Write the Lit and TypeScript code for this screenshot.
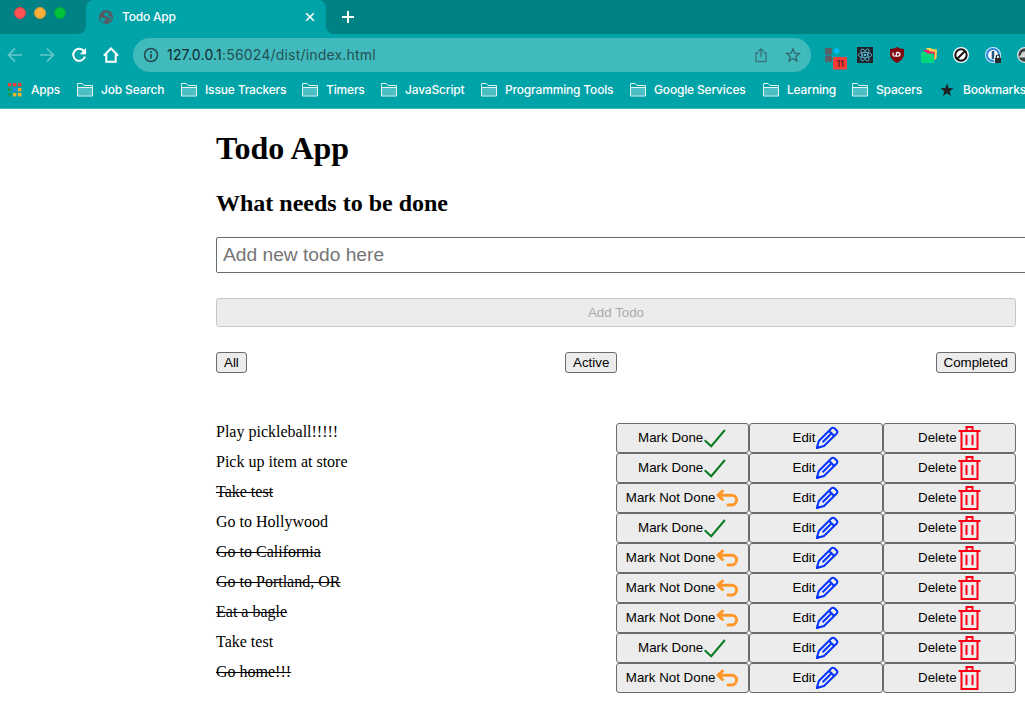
import { LitElement, html, css, svg } from "lit";
import { customElement, property } from "lit/decorators.js";

const folder = html`<svg width="16" height="14" viewBox="0 0 16 14"><path d="M1 5h14v7.500H1z" fill="#4bbfc3"/><path d="M.5 13V.5h4.700l1.800 2h8.500V13zM.5 4.500h15" fill="none" stroke="#e2f5f5"/></svg>`;

const gridColors = ["#f23b3b", "#f23b3b", "#f23b3b", "#169b58", "#2a86e8", "#f6a623", "#169b58", "#f6b52b", "#f6b52b"];
const appsGrid = html`<svg width="14" height="14" viewBox="0 0 14 14">${gridColors.map(
  (c, i) => svg`<rect x=${(i % 3) * 5} y=${Math.floor(i / 3) * 5} width="3.400" height="3.400" fill=${c}/>`
)}</svg>`;

const starSolid = html`<svg width="14" height="14" viewBox="0 0 14 14"><path d="M7 .5l1.700 4.500 4.800.2-3.800 3 1.300 4.700L7 10.200l-4 2.700 1.300-4.700-3.800-3 4.800-.2z" fill="#202124"/></svg>`;

const bookmarks = [
  { name: "Apps", icon: appsGrid, width: 69 },
  { name: "Job Search", icon: folder, width: 104 },
  { name: "Issue Trackers", icon: folder, width: 121 },
  { name: "Timers", icon: folder, width: 79 },
  { name: "JavaScript", icon: folder, width: 100 },
  { name: "Programming Tools", icon: folder, width: 149 },
  { name: "Google Services", icon: folder, width: 133 },
  { name: "Learning", icon: folder, width: 89 },
  { name: "Spacers", icon: folder, width: 87 },
  { name: "Bookmarks", icon: starSolid, width: 86 },
];

@customElement("browser-chrome")
class BrowserChrome extends LitElement {
  static styles = css`
    :host { display: block; font-family: Inter, "Open Sans", sans-serif; color: #fff; }
    svg { display: block; flex: none; }
    .strip { height: 34px; background: #008285; display: flex; }
    .lights { width: 66px; height: 34px; padding: 7px 0 0 14px; box-sizing: border-box; display: flex; gap: 8px; margin-right: 12px; }
    .light { width: 12px; height: 12px; border-radius: 50%; box-sizing: border-box; border: 1px solid; }
    .red { background: #ff5353; border-color: #e04446; }
    .amber { background: #ffb03c; border-color: #dc9c38; }
    .green { background: #00c33c; border-color: #00aa38; }
    .curve { width: 8px; height: 34px; background: #00a3a8; flex: none; }
    .curve i { display: block; height: 34px; background: #008285; }
    .curve.left i { border-bottom-right-radius: 8px; }
    .curve.right i { border-bottom-left-radius: 8px; }
    .tab { width: 240px; box-sizing: border-box; background: #00a3a8; border-radius: 8px 8px 0 0; display: flex; align-items: center; padding: 0 11px 0 13px; font-size: 12px; font-weight: 500; }
    .tab span { flex: 1; margin: -2px 0 0 9px; letter-spacing: -.2px; }
    .plus { margin: 10px 0 0 7px; }
    .toolbar { height: 42px; background: #00a3a8; display: flex; align-items: center; overflow: hidden; }
    .nav { width: 133px; display: flex; gap: 16px; padding-left: 7px; box-sizing: border-box; flex: none; }
    .address { width: 678px; height: 34px; box-sizing: border-box; border-radius: 17px; background: #40babd; color: #245153; display: flex; align-items: center; padding: 0 9px 0 10px; font-size: 14px; flex: none; }
    .address span { flex: 1; margin: -1px 0 0 8px; letter-spacing: .19px; }
    .address b { font-weight: 400; color: #14292b; }
    .address svg + svg { margin-left: 15px; }
    .extensions { display: flex; margin-left: 11px; flex: none; align-items: center; }
    .extensions svg { margin-right: 8px; overflow: visible; }
    .bookmarks { height: 33px; box-sizing: border-box; background: #00a3a8; border-bottom: 1px solid #40babd; display: flex; align-items: center; padding: 0 0 4px 8px; overflow: hidden; }
    .bookmark { display: flex; align-items: center; flex: none; font-size: 12px; font-weight: 500; letter-spacing: -.17px; white-space: nowrap; }
    .slot { width: 24px; flex: none; }
    .first .slot { width: 23px; }
    .last .slot { width: 24px; padding-left: 1px; box-sizing: border-box; }
    .label { flex: none; margin-top: -2px; }
  `;
  render() {
    return html`
      <div class="strip">
        <div class="lights"><div class="light red"></div><div class="light amber"></div><div class="light green"></div></div>
        <div class="curve left"><i></i></div>
        <div class="tab">
          <svg width="14" height="14" viewBox="0 0 14 14"><circle cx="7" cy="7" r="7" fill="#565c63"/><path d="M1.500 7.500l2.500.3 2.500 1-.3 1.500-.9.500-.3 2C2.900 12 1.300 10.300 1.500 7.500zM8 1.500L7.200 3 5 3.600l.2 1.800 2 .5 1.300 1.200 2.300.4.3 1.500-1.200 1.400-1.800.7c3 .2 4.500-2 4.400-4.400L10 6.300 8.700 5l1.400-1z" fill="#00a3a8"/></svg>
          <span>Todo App</span>
          <svg width="10" height="10" viewBox="0 0 10 10"><path d="M1.200 1.200l7.600 7.600M8.800 1.200L1.200 8.800" stroke="#fff" stroke-width="1.600"/></svg>
        </div>
        <div class="curve right"><i></i></div>
        <svg class="plus" width="14" height="14" viewBox="0 0 14 14"><path d="M7 1v12M1 7h12" stroke="#fff" stroke-width="2"/></svg>
      </div>
      <div class="toolbar">
        <div class="nav">
          <svg width="16" height="16" viewBox="0 0 16 16"><path d="M15 8H2M8 1.500L1.500 8 8 14.500" fill="none" stroke="#66c8cb" stroke-width="1.700"/></svg>
          <svg width="16" height="16" viewBox="0 0 16 16"><path d="M1 8h13M8 1.500L14.500 8 8 14.500" fill="none" stroke="#66c8cb" stroke-width="1.700"/></svg>
          <svg width="16" height="16" viewBox="0 0 16 16"><path d="M13.200 4.400A6 6 0 1 0 14 9.500" fill="none" stroke="#fff" stroke-width="2"/><path d="M15 1v6.200H8.800z" fill="#fff"/></svg>
          <svg width="16" height="16" viewBox="0 0 16 16"><path d="M.8 8.600L8 1.500l7.200 7.100M3.300 7v7.700h9.400V7" fill="none" stroke="#fff" stroke-width="2"/></svg>
        </div>
        <div class="address">
          <svg width="16" height="16" viewBox="0 0 16 16"><circle cx="8" cy="8" r="6.500" fill="none" stroke="#28494b" stroke-width="1.500"/><path d="M8 7v4.500M8 4.300v1.600" stroke="#28494b" stroke-width="1.700"/></svg>
          <span><b>127.0.0.1</b>:56024/dist/index.html</span>
          <svg width="16" height="16" viewBox="0 0 16 16"><path d="M5.500 6H3v8.500h10V6h-2.500M8 10.500V2M5.300 4.500L8 1.800l2.700 2.700" fill="none" stroke="#37777a" stroke-width="1.400"/></svg>
          <svg width="18" height="16" viewBox="0 0 18 16"><path d="M9 1.800l1.700 4.400 4.700.3-3.600 3 1.200 4.600L9 11.500l-4 2.600 1.200-4.600-3.600-3 4.700-.3z" fill="none" stroke="#306b6e" stroke-width="1.300"/></svg>
        </div>
        <div class="extensions">
          <svg width="24" height="24" viewBox="0 0 24 24"><rect x="3" y="5" width="7" height="6.500" rx="1" fill="#5b5f64"/><rect x="3" y="12.500" width="7" height="6.500" rx="1" fill="#5b5f64"/><path d="M14.500 4.500L18 8l-3.500 3.500L11 8z" fill="#00bfff"/><rect x="11" y="14" width="14" height="12.500" rx="1.500" fill="#f93a37"/><text x="18" y="24" text-anchor="middle" font-size="9.500" fill="#23191a">11</text></svg>
          <svg width="24" height="24" viewBox="0 0 24 24"><path d="M3 4h16v16H3z" fill="#20232a"/><g fill="none" stroke="#59bdd8" stroke-width=".8"><ellipse cx="11" cy="12" rx="6.800" ry="2.600"/><ellipse cx="11" cy="12" rx="6.800" ry="2.600" transform="rotate(60 11 12)"/><ellipse cx="11" cy="12" rx="6.800" ry="2.600" transform="rotate(120 11 12)"/></g><circle cx="11" cy="12" r="1.300" fill="#59bdd8"/></svg>
          <svg width="24" height="24" viewBox="0 0 24 24"><path d="M11 4c2 1.300 4.500 1.800 7 2v5c0 4-3 7-7 9-4-2-7-5-7-9V6c2.500-.2 5-.7 7-2z" fill="#800610"/><path d="M7 9.500v2.200q0 1.500 1.700 1.500t1.700-1.500V9.500v3.700h1.100q2.500 0 2.500-1.850T11.500 9.500h-1" fill="none" stroke="#fff" stroke-width="1.300"/></svg>
          <svg width="24" height="24" viewBox="0 0 24 24"><path d="M8 5h5l1 1 5 .5-.5 9L16 17z" fill="#f8d34a"/><path d="M5.500 7h5l1 1.200 5.500.8-1 9-3 1z" fill="#ef1c6b"/><path d="M3 9h5l1.300 1.500H16V20H4.500Q3 20 3 18.500z" fill="#00d87d"/></svg>
          <svg width="24" height="24" viewBox="0 0 24 24"><circle cx="11" cy="12" r="8" fill="#fff"/><circle cx="11" cy="12" r="5.700" fill="#fff" stroke="#111" stroke-width="2"/><path d="M7 16l8-8" stroke="#111" stroke-width="2"/></svg>
          <svg width="24" height="24" viewBox="0 0 24 24"><circle cx="11" cy="12" r="8" fill="#d7e8f5"/><circle cx="11" cy="12" r="6" fill="#fff" stroke="#2586dc" stroke-width="2"/><path d="M11 8v8" stroke="#285580" stroke-width="2.600"/><path d="M12 13h7v7h-7z" fill="#d8eef0"/><path d="M13 15h6v5h-6z" fill="#292b2d"/><path d="M14.300 15v-1.300a1.700 1.700 0 0 1 3.400 0V15" fill="none" stroke="#292b2d" stroke-width="1.200"/></svg>
          <svg width="24" height="24" viewBox="0 0 24 24"><circle cx="11" cy="12" r="7.300" fill="#3f4242" stroke="#e8e8e8" stroke-width="1.300"/><path d="M5 14.500q0-2 2-2.500 0-3 3-3.500 4-.5 4 4v2z" fill="#d5d5d5"/></svg>
        </div>
      </div>
      <div class="bookmarks">
        ${bookmarks.map(
          (b, i) => html`<div class="bookmark ${i === 0 ? "first" : i === 9 ? "last" : ""}" style="width:${b.width}px">
            <div class="slot">${b.icon}</div><div class="label">${b.name}</div></div>`
        )}
      </div>`;
  }
}

const check = html`<svg width="24" height="24" viewBox="0 0 24 24"><path d="M1.700 14.200l6.500 6L21.900 4" fill="none" stroke="#087a20" stroke-width="2"/></svg>`;
const undo = html`<svg width="24" height="24" viewBox="0 0 24 24"><path d="M7.500 5L3 9.200l4.500 4.300M3 9.200h13.700a4.900 4.900 0 0 1 0 9.800H13" fill="none" stroke="#ff9829" stroke-width="3" stroke-linecap="round" stroke-linejoin="round"/></svg>`;
const pencil = html`<svg width="24" height="24" viewBox="0 0 24 24"><path d="M1.800 22l2-7L16.500 2.300q1.500-1.200 3 0l2.200 2.200q1.300 1.500 0 3L9 20zM14 4.800l5.200 5.200M7.600 16.200l8.200-8.200" fill="none" stroke="#0433ff" stroke-width="2" stroke-linejoin="round"/><path d="M1 23l1.300-4.600 3.200 3.300z" fill="#0433ff"/></svg>`;
const trash = html`<svg width="24" height="24" viewBox="0 0 24 24"><path d="M1.500 5h22M4.500 5v18h16V5M9.500 5V1h6v4M9.500 9v10M15.500 9v10" fill="none" stroke="#ff0016" stroke-width="2"/></svg>`;

@customElement("todo-row")
class TodoRow extends LitElement {
  @property() text = "";
  @property({ type: Boolean }) done = false;
  static styles = css`
    :host { display: grid; grid-template-columns: 400px 400px; height: 30px; }
    .text { font-size: 16px; line-height: 18px; }
    .done { text-decoration: line-through; }
    .actions { display: grid; grid-template-columns: repeat(3, 1fr); }
    button { font: 13.333px "Liberation Sans", Arial, sans-serif; color: #000; background: #ececec; border: 1px solid #6b6b6b; border-radius: 3px; padding: 0; display: flex; align-items: center; justify-content: center; min-width: 0; white-space: nowrap; }
    svg { display: block; flex: none; margin-top: -1px; }
    span { margin-top: -1px; }
  `;
  render() {
    return html`<div class="text"><span class=${this.done ? "done" : ""}>${this.text}</span></div>
      <div class="actions">
        <button><span>${this.done ? "Mark Not Done" : "Mark Done"}</span>${this.done ? undo : check}</button>
        <button><span>Edit</span>${pencil}</button>
        <button><span>Delete</span>${trash}</button>
      </div>`;
  }
}

const todos: [string, boolean][] = [
  ["Play pickleball!!!!!", false],
  ["Pick up item at store", false],
  ["Take test", true],
  ["Go to Hollywood", false],
  ["Go to California", true],
  ["Go to Portland, OR", true],
  ["Eat a bagle", true],
  ["Take test", false],
  ["Go home!!!", true],
];

@customElement("app-root")
class AppRoot extends LitElement {
  static styles = css`
    :host { display: block; width: 1025px; height: 702px; overflow: hidden; background: #fff; color: #000; font-family: "Liberation Serif", "Times New Roman", serif; }
    main { width: 800px; margin-left: 216px; padding-top: 21px; }
    h1 { font-size: 32px; line-height: 37px; margin: 0 0 23px; }
    h2 { font-size: 24px; line-height: 27px; margin: 0 0 20px; }
    input { display: block; width: 816px; height: 36px; box-sizing: border-box; font: 19.2px "Liberation Sans", Arial, sans-serif; padding: 0 6px; border: 1px solid #6b6b6b; border-radius: 2px; margin: 0 0 25px; }
    input::placeholder { color: #757575; opacity: 1; }
    button { font: 13.333px "Liberation Sans", Arial, sans-serif; color: #000; background: #ececec; border: 1px solid #6b6b6b; border-radius: 3px; box-sizing: border-box; }
    .add { display: block; width: 100%; height: 29px; color: #aaa; border-color: #c8c8c8; margin-bottom: 25px; }
    .filters { display: flex; justify-content: space-between; margin-bottom: 50px; }
    .filters button { height: 21px; padding: 0 7px; line-height: 19px; }
  `;
  render() {
    return html`<browser-chrome></browser-chrome>
      <main>
        <h1>Todo App</h1>
        <h2>What needs to be done</h2>
        <input placeholder="Add new todo here" />
        <button class="add" disabled>Add Todo</button>
        <div class="filters"><button>All</button><button>Active</button><button>Completed</button></div>
        ${todos.map(([t, d]) => html`<todo-row .text=${t} .done=${d}></todo-row>`)}
      </main>`;
  }
}
